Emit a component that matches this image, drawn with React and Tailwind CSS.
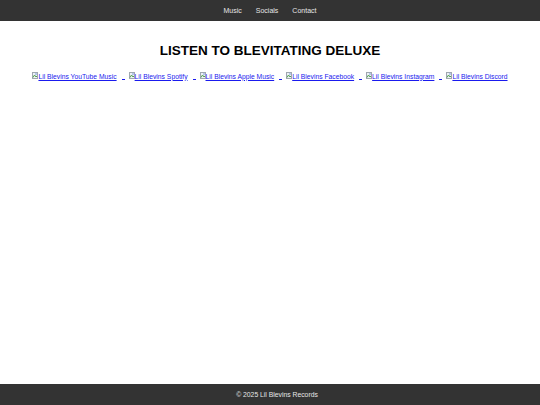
import React from "react";

const links = [
  "Lil Blevins YouTube Music",
  "Lil Blevins Spotify",
  "Lil Blevins Apple Music",
  "Lil Blevins Facebook",
  "Lil Blevins Instagram",
  "Lil Blevins Discord",
];

function Broken() {
  return (
    <svg width="6" height="7" viewBox="0 0 6 7" className="inline-block align-baseline">
      <rect x="0.5" y="0.5" width="5" height="6" fill="#eef2f6" stroke="#a0a8b0" strokeWidth="1" />
      <path d="M1 5.5 L2.5 3 L4 5 L5 4" stroke="#55a050" strokeWidth="1" fill="none" />
      <circle cx="4" cy="2" r="0.8" fill="#6b8fd6" />
    </svg>
  );
}

export default function App() {
  return (
    <div className="min-h-[405px] flex flex-col bg-white" style={{ fontFamily: '"Liberation Sans", Arial, sans-serif' }}>
      <nav className="h-[21px] pt-[1px] bg-[#333333] flex items-center justify-center gap-[14px] text-[7px] text-[#e6e6e6]">
        <a href="#">Music</a>
        <a href="#">Socials</a>
        <a href="#">Contact</a>
      </nav>
      <main className="flex-1 flex flex-col items-center">
        <h1 className="mt-[23px] text-[13.5px] font-bold text-black leading-none">LISTEN TO BLEVITATING DELUXE</h1>
        <div className="mt-[14px] text-[6.75px] leading-none whitespace-nowrap flex items-end">
          {links.map((l, i) => (
            <React.Fragment key={l}>
              <a href="#" className="text-[#1a1aee] underline">
                <Broken />
                {l}
              </a>
              {i < links.length - 1 && (
                <span className="inline-block w-[3px] h-[6px] border-b border-[#1a1aee] ml-[5px] mr-[4px]"></span>
              )}
            </React.Fragment>
          ))}
        </div>
      </main>
      <footer className="h-[21px] pt-[1px] bg-[#333333] flex items-center justify-center pl-[14px] text-[6.8px] text-[#e6e6e6]">
        © 2025 Lil Blevins Records
      </footer>
    </div>
  );
}
